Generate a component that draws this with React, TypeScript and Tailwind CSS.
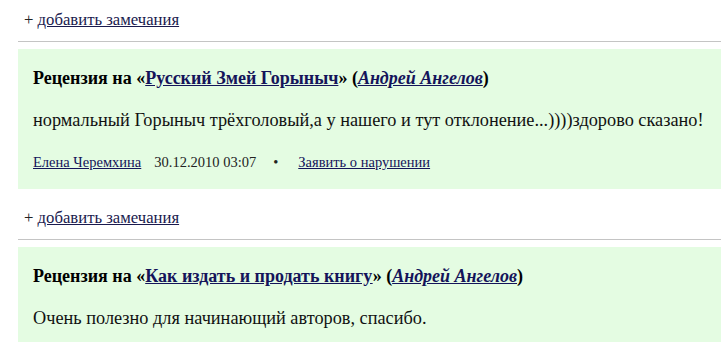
import React from "react";

const serif = { fontFamily: '"Liberation Serif", "Times New Roman", serif' };

function AddNote() {
  return (
    <div className="pl-[24px] pt-[10px] h-[41px] text-[16.7px] leading-[20px] text-[#222]">
      + <a href="#" className="underline text-[#1a1a4e]">добавить замечания</a>
    </div>
  );
}

function Review({
  title,
  text,
  meta,
}: {
  title: string;
  text: string;
  meta: boolean;
}) {
  return (
    <div className="ml-[18px] border-t border-[#c4c4c4] pt-[7px]">
      <div className="bg-[#e4fce2] pl-[15px] pr-[10px] pt-[18px] pb-[18px]">
        <div className="text-[18px] leading-[22px] font-bold text-black">
          Рецензия на «
          <a href="#" className="underline text-[#14145a]">{title}</a>» (
          <a href="#" className="underline italic text-[#14145a]">Андрей Ангелов</a>)
        </div>
        <div className="mt-[20px] text-[18.3px] leading-[22px] text-[#111]">{text}</div>
        {meta && (
          <div className="mt-[22px] text-[14.5px] leading-[18px] text-[#222] flex items-center">
            <a href="#" className="underline text-[#14145a]">Елена Черемхина</a>
            <span className="ml-[13px]">30.12.2010 03:07</span>
            <span className="ml-[17px]">•</span>
            <a href="#" className="ml-[20px] underline text-[#14145a]">Заявить о нарушении</a>
          </div>
        )}
      </div>
    </div>
  );
}

export default function App() {
  return (
    <div className="w-[721px] h-[342px] overflow-hidden bg-white" style={serif}>
      <AddNote />
      <Review
        title="Русский Змей Горыныч"
        text="нормальный Горыныч трёхголовый,а у нашего и тут отклонение...))))здорово сказано!"
        meta
      />
      <div className="h-[9px]" />
      <AddNote />
      <Review
        title="Как издать и продать книгу"
        text="Очень полезно для начинающий авторов, спасибо."
        meta={false}
      />
    </div>
  );
}
